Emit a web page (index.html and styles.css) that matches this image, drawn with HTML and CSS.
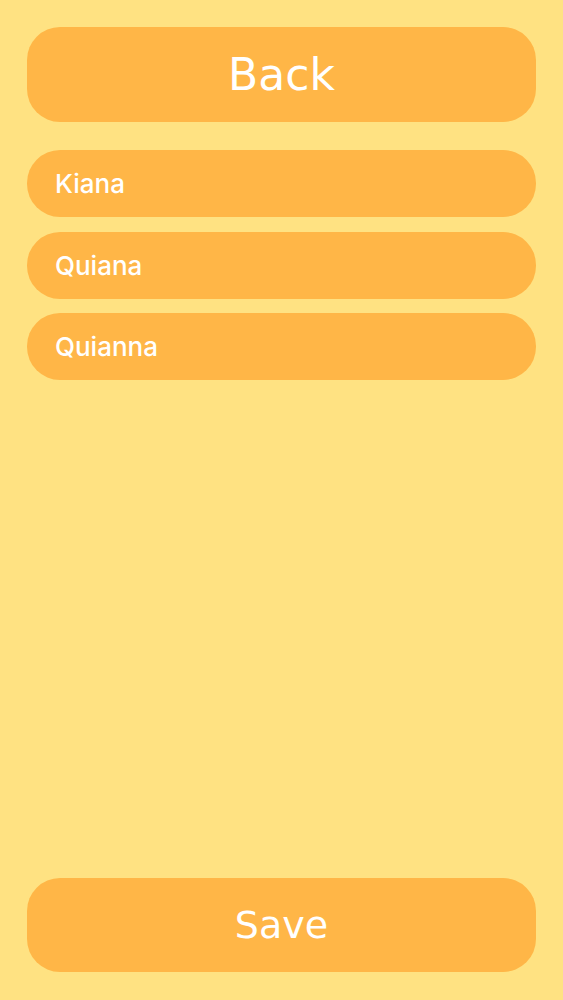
FILE: index.html
```html
<!DOCTYPE html>
<html lang="en">
<head>
  <meta charset="UTF-8" />
  <meta name="viewport" content="width=device-width, initial-scale=1" />
  <title>Names</title>
  <link rel="stylesheet" href="styles.css">
</head>
<body>
  <button class="big-btn back" id="back">Back</button>

  <ul class="names">
    <li class="name">Kiana</li>
    <li class="name">Quiana</li>
    <li class="name">Quianna</li>
  </ul>

  <button class="big-btn save" id="save">Save</button>
</body>
</html>
```

FILE: styles.css
```css
* {
  box-sizing: border-box;
}
body {
  background: #ffe282;
  margin: 0;
  padding: 27px 27px 28px;
  height: 1000px;
  display: flex;
  flex-direction: column;
  overflow: hidden;
}
.big-btn {
  background: #ffb647;
  border: none;
  border-radius: 33px;
  color: #fff;
  font-family: "DejaVu Sans", sans-serif;
  height: 95px;
  width: 100%;
  flex: none;
  cursor: pointer;
}
.back {
  font-size: 44px;
}
.save {
  font-size: 38px;
  margin-top: auto;
  height: 94px;
}
.names {
  list-style: none;
  margin: 28px 0 0;
  padding: 0;
  display: flex;
  flex-direction: column;
  gap: 14.5px;
}
.name {
  background: #ffb647;
  border-radius: 33px;
  color: #fff;
  font-family: "Inter", sans-serif;
  font-size: 26px;
  font-weight: 500;
  height: 67px;
  padding: 0 28px;
  display: flex;
  align-items: center;
}
```
